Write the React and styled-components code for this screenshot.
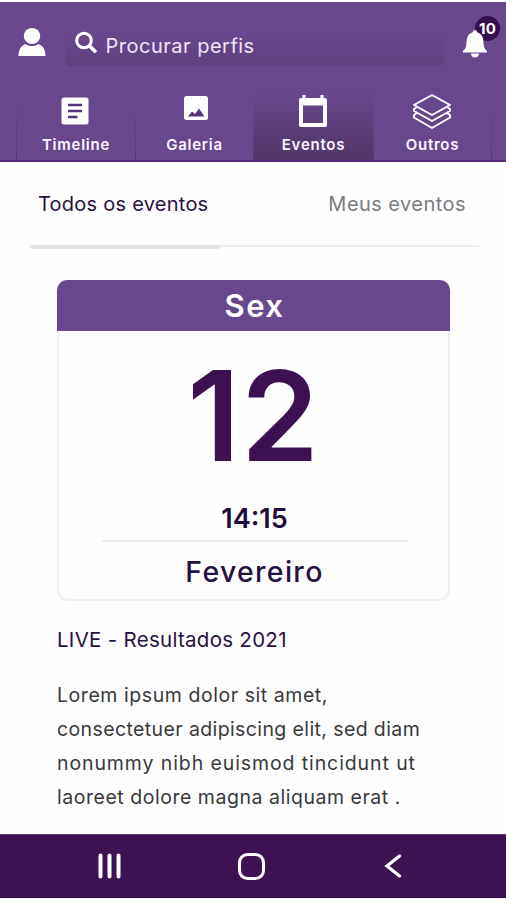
import React from 'react'
import styled, { createGlobalStyle } from 'styled-components'

const GlobalStyle = createGlobalStyle`
  * {
    box-sizing: border-box;
  }
  body {
    margin: 0;
    background: #fefefe;
    font-family: Inter, "Liberation Sans", sans-serif;
  }
  svg {
    display: block;
  }
`;

const Container = styled.div`
  height: 900px;
  padding: 2px 0;
  display: flex;
  flex-direction: column;
  overflow: hidden;
`;
const Header = styled.header`
  height: 160px;
  display: flex;
  flex-direction: column;
  justify-content: space-between;
  background: #68478c;
  border-bottom: 2px solid #52287b;
`;
const TopBar = styled.div`
  height: 64px;
  padding: 0 18px;
  display: flex;
  align-items: flex-end;
  justify-content: space-between;
`;
const Profile = styled.div`
  width: 28px;
  height: 38px;
`;
const Search = styled.div`
  width: 379px;
  height: 36px;
  padding-left: 10px;
  display: flex;
  border-radius: 5px;
  background: linear-gradient(#68478c 15%, #5f407f);
`;
const SearchText = styled.span`
  margin: 4px 0 0 8px;
  font-size: 20px;
  line-height: 25px;
  letter-spacing: 0.5px;
  color: #efe6f7;
`;
const Bell = styled.div`
  position: relative;
  width: 26px;
  height: 36px;

  svg {
    position: relative;
  }
`;
const Badge = styled.span`
  position: absolute;
  left: 13px;
  top: -14px;
  width: 25px;
  height: 25px;
  border-radius: 50%;
  background: #350f4d;
  color: #fff;
  font-size: 15px;
  font-weight: 700;
  line-height: 25px;
  letter-spacing: 0.3px;
  text-align: center;
`;
const Nav = styled.nav`
  height: 67px;
  padding: 0 14px 0 16px;
  display: grid;
  grid-template-columns: 119px 118px 120px 119px;
`;
const NavItem = styled.div`
  display: flex;
  flex-direction: column;
  align-items: center;
  justify-content: space-between;
  padding-bottom: 6px;
  border-left: 1px solid;
  border-image: linear-gradient(#68478c 20%, #573779) 1;
  background: ${props => props.$active ? 'linear-gradient(#68478c, #523668)' : 'none'};

  &:last-child {
    border-right: 1px solid;
  }
`;
const NavIcon = styled.div`
  height: 36px;
  margin-right: 2px;
  display: flex;
  align-items: center;
`;
const NavText = styled.span`
  font-size: 15px;
  font-weight: 600;
  line-height: 18px;
  letter-spacing: 0.75px;
  color: #fbf4ff;
`;
const Tabs = styled.div`
  height: 87px;
  margin: 0 27px 0 30px;
  display: flex;
  justify-content: space-between;
  align-items: flex-start;
  padding: 30px 13px 0 8px;
`;
const Tab = styled.span`
  font-size: 20px;
  line-height: 24px;
  letter-spacing: ${props => props.$active ? '0.25px' : '0.45px'};
  color: ${props => props.$active ? '#2a1142' : '#7b7b7d'};
`;
const TabLine = styled.div`
  height: 2px;
  margin: -4px 27px 0 30px;
  background: #eeeef0;
`;
const TabMarker = styled.div`
  width: 190px;
  height: 4px;
  border-radius: 0 0 3px 3px;
  background: #e5e5e7;
`;
const Card = styled.section`
  width: 393px;
  height: 321px;
  margin: 33px 0 0 57px;
  display: flex;
  flex-direction: column;
  align-items: center;
  flex-shrink: 0;
  border: 2px solid #f0f0f2;
  border-top: 0;
  border-radius: 11px;
`;
const Weekday = styled.div`
  width: 393px;
  height: 51px;
  padding-left: 2px;
  flex-shrink: 0;
  border-radius: 10px 10px 0 0;
  background: #68478c;
  color: #fff;
  font-size: 31px;
  font-weight: 600;
  line-height: 51px;
  letter-spacing: 1.5px;
  text-align: center;
`;
const Day = styled.div`
  margin-top: 26px;
  font-size: 125px;
  font-weight: 600;
  line-height: 118px;
  letter-spacing: 1px;
  color: #3d1052;
`;
const Time = styled.div`
  width: 305px;
  height: 67px;
  margin-left: 2px;
  padding-top: 29px;
  border-bottom: 2px solid #ececee;
  font-size: 27px;
  font-weight: 600;
  line-height: 30px;
  text-align: center;
  color: #1f0b38;
`;
const Month = styled.div`
  margin-top: 12px;
  padding-left: 2px;
  font-size: 28.5px;
  font-weight: 500;
  line-height: 36px;
  letter-spacing: 1.3px;
  color: #251040;
`;
const Details = styled.article`
  flex: 1;
  padding: 26px 0 0 57px;
`;
const EventTitle = styled.h1`
  margin: 0 0 25px;
  font-size: 20.5px;
  font-weight: 400;
  line-height: 26px;
  letter-spacing: 0.28px;
  color: #29113f;
`;
const Line = styled.p`
  margin: 0;
  font-size: 19.5px;
  line-height: 34px;
  letter-spacing: ${props => props.$spacing}px;
  white-space: nowrap;
  color: #39393b;
`;
const BottomBar = styled.footer`
  height: 64px;
  flex-shrink: 0;
  padding: 0 104px 0 97px;
  display: grid;
  grid-template-columns: 141px 1fr auto;
  align-items: center;
  background: #3d1152;
  border-top: 1px solid #5c3b70;
  border-bottom: 1px solid #260c42;
`;

const UserIcon = () => (
  <svg width="28" height="28" viewBox="0 0 28 28" fill="#fff">
    <ellipse cx="14" cy="8" rx="8.2" ry="8" />
    <path d="M.5 28c0-6 2.5-10.5 7-12 4 2.7 9 2.7 13 0 4.5 1.5 7 6 7 12z" />
  </svg>
)

const SearchIcon = () => (
  <svg width="23" height="24" viewBox="0 0 23 24" fill="none" stroke="#fff" strokeWidth="3">
    <circle cx="9" cy="10.5" r="7.3" />
    <path d="M14.3 15.8l6.7 6.5" strokeWidth="3.6" />
  </svg>
)

const BellIcon = () => (
  <svg width="26" height="28" viewBox="0 0 26 28" fill="#fff">
    <path d="M13 0c1.3 0 2 .8 2 2.2 4 1 6.2 4.3 6.4 8.8.2 5.500.8 7.500 3.600 10v1.500H1V21c2.800-2.500 3.400-4.500 3.600-10C4.800 6.500 7 3.200 11 2.200 11 .8 11.700 0 13 0z" />
    <path d="M9 23.500h8c0 2.500-1.700 4-4 4s-4-1.500-4-4z" />
  </svg>
)

const TimelineIcon = () => (
  <svg width="28" height="28" viewBox="0 0 28 28">
    <rect x=".5" y=".5" width="27" height="27" rx="2.5" fill="#fff" />
    <path d="M7 8h14M7 14h14M7 20h9.500" stroke="#56347a" strokeWidth="2.5" />
  </svg>
)

const GalleryIcon = () => (
  <svg width="28" height="34" viewBox="0 0 28 34">
    <rect x="4" y="2" width="24" height="24" rx="2.5" fill="#fff" />
    <path d="M8 22.500l4-5 3 2.500 4-5.500 5.500 8z" fill="#56347a" />
  </svg>
)

const CalendarIcon = () => (
  <svg width="28" height="34" viewBox="0 0 28 34">
    <path fill="#fff" fillRule="evenodd" d="M3.500 1h3v3h15V1h3v3H26a2 2 0 0 1 2 2v25a2 2 0 0 1-2 2H2a2 2 0 0 1-2-2V6a2 2 0 0 1 2-2h1.500zM4 11.500V29h20V11.500z" />
  </svg>
)

// top sheet is whole, the two under it only show their front edges
const LayersIcon = () => (
  <svg width="40" height="36" viewBox="0 0 40 36" fill="none" stroke="#fff" strokeWidth="1.9" strokeLinejoin="round">
    <path d="M20 2l18 10-18 10L2 12z" />
    <path d="M4.500 14.500L2 16v2l18 10 18-10v-2l-2.500-1.500M4.500 20.500L2 22v2.500L20 35l18-10.500V22l-2.500-1.500" />
  </svg>
)

const RecentsIcon = () => (
  <svg width="25" height="26" viewBox="0 0 25 26" stroke="#fff" strokeWidth="4" strokeLinecap="round">
    <path d="M3.500 2.500v21M12.500 2.500v21M21.500 2.500v21" />
  </svg>
)

const HomeIcon = () => (
  <svg width="27" height="27" viewBox="0 0 27 27" fill="none" stroke="#fff" strokeWidth="3">
    <rect x="1.5" y="1.5" width="24" height="24" rx="8" />
  </svg>
)

const BackIcon = () => (
  <svg width="18" height="24" viewBox="0 0 18 24" fill="none" stroke="#fff" strokeWidth="3.2" strokeLinecap="round">
    <path d="M15.500 2L3 12l12.500 10" />
  </svg>
)

const navItems = [
  { name: 'Timeline', icon: <TimelineIcon /> },
  { name: 'Galeria', icon: <GalleryIcon /> },
  { name: 'Eventos', icon: <CalendarIcon />, active: true },
  { name: 'Outros', icon: <LayersIcon /> },
]

const App = () => {
  return (
    <Container>
      <GlobalStyle />
      <Header>
        <TopBar>
          <Profile><UserIcon /></Profile>
          <Search>
            <SearchIcon />
            <SearchText>Procurar perfis</SearchText>
          </Search>
          <Bell>
            <Badge>10</Badge>
            <BellIcon />
          </Bell>
        </TopBar>
        <Nav>
          {navItems.map(item => (
            <NavItem key={item.name} $active={item.active}>
              <NavIcon>{item.icon}</NavIcon>
              <NavText>{item.name}</NavText>
            </NavItem>
          ))}
        </Nav>
      </Header>
      <Tabs>
        <Tab $active>Todos os eventos</Tab>
        <Tab>Meus eventos</Tab>
      </Tabs>
      <TabLine>
        <TabMarker />
      </TabLine>
      <Card>
        <Weekday>Sex</Weekday>
        <Day>12</Day>
        <Time>14:15</Time>
        <Month>Fevereiro</Month>
      </Card>
      <Details>
        <EventTitle>LIVE - Resultados 2021</EventTitle>
        <Line $spacing={0.56}>Lorem ipsum dolor sit amet,</Line>
        <Line $spacing={0.39}>consectetuer adipiscing elit, sed diam</Line>
        <Line $spacing={0.9}>nonummy nibh euismod tincidunt ut</Line>
        <Line $spacing={0.53}>laoreet dolore magna aliquam erat .</Line>
      </Details>
      <BottomBar>
        <RecentsIcon />
        <HomeIcon />
        <BackIcon />
      </BottomBar>
    </Container>
  )
}

export default App
